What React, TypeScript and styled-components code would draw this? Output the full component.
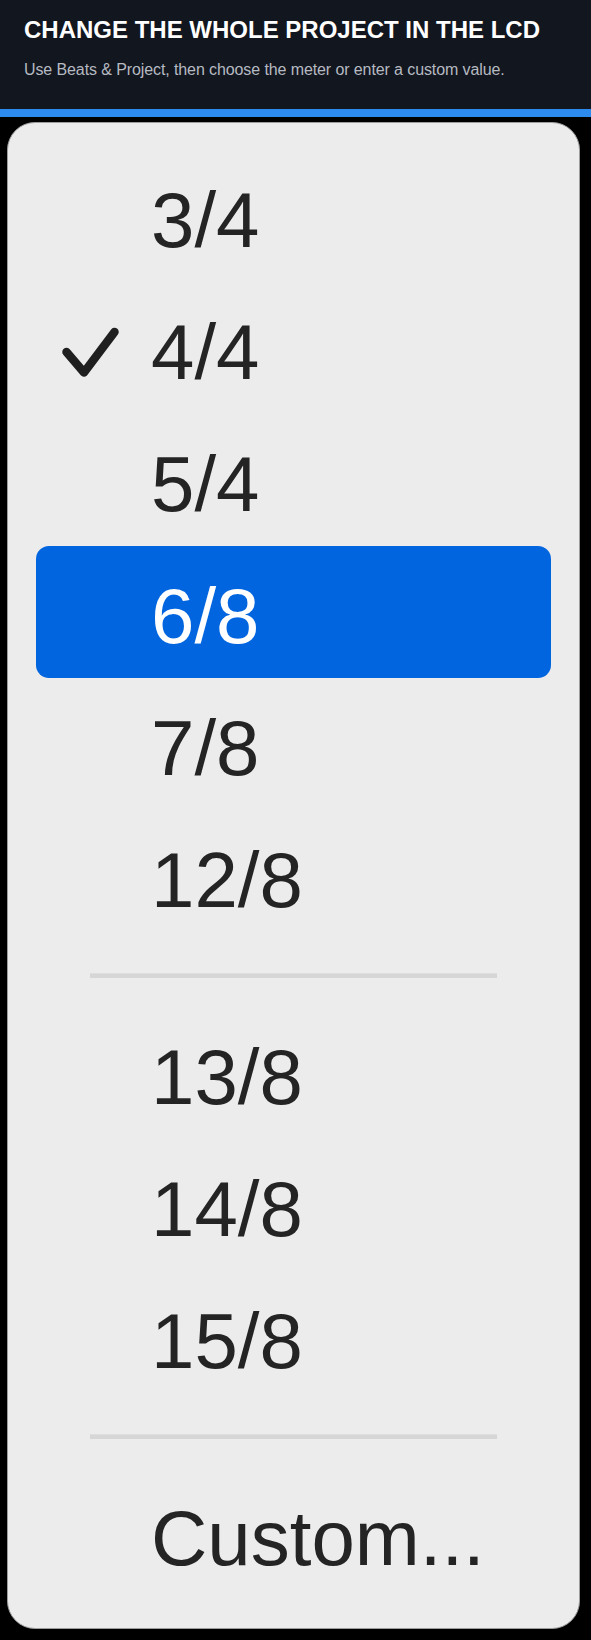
import React from 'react';
import styled, { createGlobalStyle } from 'styled-components';

const GlobalStyle = createGlobalStyle`
  body {
    margin: 0;
    background: #000;
    font-family: 'Liberation Sans', Arial, sans-serif;
  }
`;

type MeterEntry = { label: string; checked?: boolean; active?: boolean };

const meterGroups: MeterEntry[][] = [
  [
    { label: '3/4' },
    { label: '4/4', checked: true },
    { label: '5/4' },
    { label: '6/8', active: true },
    { label: '7/8' },
    { label: '12/8' },
  ],
  [{ label: '13/8' }, { label: '14/8' }, { label: '15/8' }],
  [{ label: 'Custom...' }],
];

const Header = styled.header`
  background: #12161e;
  padding: 16px 24px 29px;
  border-bottom: 8px solid #2d8bef;
`;

const Title = styled.h1`
  margin: 0;
  font-size: 24px;
  line-height: 28px;
  font-weight: 700;
  color: #fff;
  text-transform: uppercase;
`;

const Subtitle = styled.p`
  margin: 16px 0 0;
  font-size: 16px;
  line-height: 20px;
  letter-spacing: -0.1px;
  color: #b6bac2;
`;

const Menu = styled.div`
  margin: 5px 11px 10px 7px;
  padding: 27px 28px 28px;
  background: #ececec;
  border: 1px solid #9d9d9d;
  border-radius: 28px;
`;

const MenuItem = styled.div<{ $active?: boolean }>`
  display: flex;
  height: 132px;
  padding-top: 8px;
  box-sizing: border-box;
  border-radius: 13px;
  background: ${(p) => (p.$active ? '#0165df' : 'transparent')};
  color: ${(p) => (p.$active ? '#fff' : '#242424')};
`;

const CheckSlot = styled.span`
  width: 115px;
  flex-shrink: 0;
  display: flex;
  align-items: center;
  padding-left: 26px;
  box-sizing: border-box;
`;

const Label = styled.span`
  font-size: 78px;
  line-height: 124px;
  white-space: nowrap;
`;

const Separator = styled.div`
  height: 5px;
  margin: 31px 54px 29px;
  background: #d6d6d6;
  border-top: 1px solid #dedede;
  box-sizing: border-box;
`;

const CheckMark = () => (
  <svg width="57" height="51" viewBox="0 0 57 51">
    <path
      d="M4.5 25 L22 45.5 L52.5 5"
      fill="none"
      stroke="#1f1f1f"
      strokeWidth="8.5"
      strokeLinecap="round"
      strokeLinejoin="round"
    />
  </svg>
);

const App: React.FC = () => {
  return (
    <>
      <GlobalStyle />
      <Header>
        <Title>Change the whole project in the LCD</Title>
        <Subtitle>Use Beats &amp; Project, then choose the meter or enter a custom value.</Subtitle>
      </Header>
      <Menu>
        {meterGroups.map((group, gi) => (
          <React.Fragment key={gi}>
            {gi > 0 && <Separator />}
            {group.map((entry) => (
              <MenuItem key={entry.label} $active={entry.active}>
                <CheckSlot>{entry.checked && <CheckMark />}</CheckSlot>
                <Label>{entry.label}</Label>
              </MenuItem>
            ))}
          </React.Fragment>
        ))}
      </Menu>
    </>
  );
};

export default App;
